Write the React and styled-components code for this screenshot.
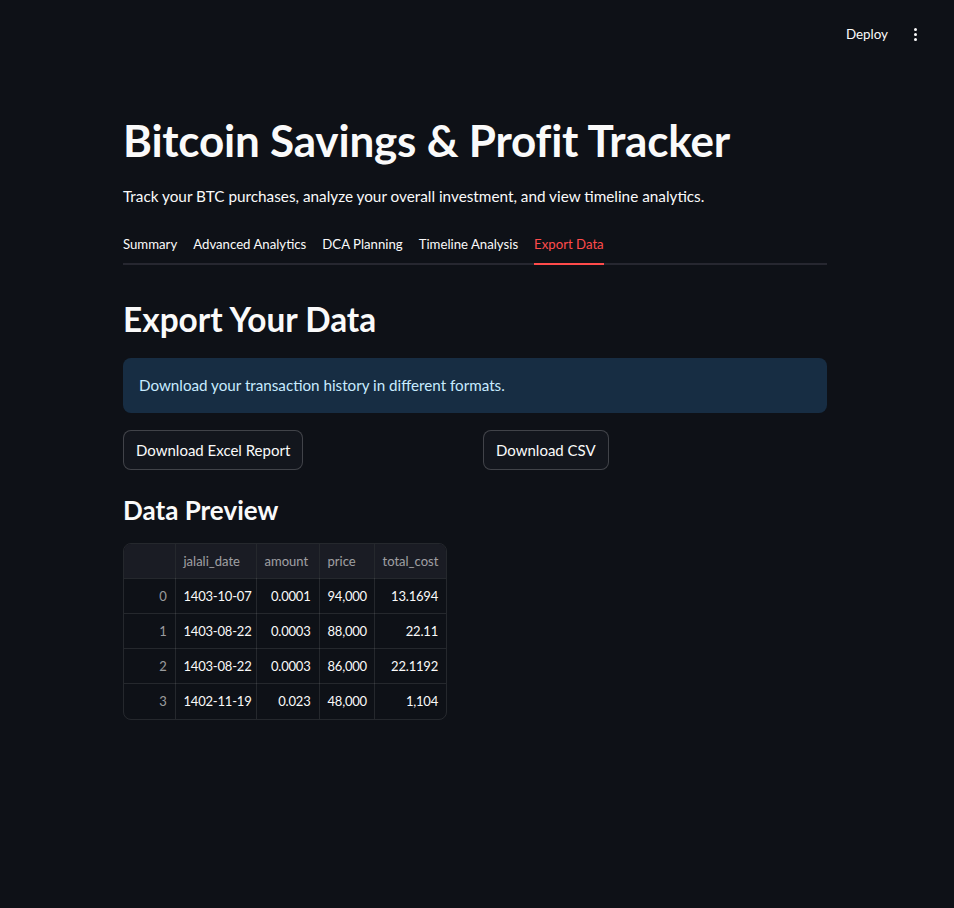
import styled, { createGlobalStyle } from 'styled-components';

const GlobalStyle = createGlobalStyle`
    html, body {
        margin: 0;
        padding: 0;
        background: #0e1117;
    }
    body {
        font-family: Lato, "Noto Sans", sans-serif;
        color: #fafafa;
    }
    * {
        box-sizing: border-box;
    }
`;

const Page = styled.div`
    min-height: 908px;
    background: #0e1117;
    padding-right: 4px;
`;

const Header = styled.header`
    height: 60px;
    display: flex;
    align-items: center;
    justify-content: flex-end;
    gap: 14px;
    padding: 8px 29px 0 0;
`;

const DeployButton = styled.span`
    font-size: 13.4px;
    color: #fafafa;
    padding: 4px 8px;
`;

const Kebab = styled.span`
    display: flex;
    flex-direction: column;
    gap: 2px;
    padding: 4px;

    i {
        width: 3px;
        height: 3px;
        border-radius: 50%;
        background: #fafafa;
    }
`;

const Block = styled.main`
    max-width: 736px;
    margin: 0 auto;
    padding: 54px 16px 0;
`;

const Title = styled.h1`
    margin: 0;
    font-size: 44px;
    font-weight: 700;
    line-height: 1.2;
    letter-spacing: -0.2px;
`;

const Subtitle = styled.p`
    margin: 17px 0 0;
    font-size: 15.3px;
    line-height: 1.6;
`;

const Tabs = styled.nav`
    display: flex;
    gap: 16px;
    margin-top: 20px;
    border-bottom: 2px solid #262730;
`;

const Tab = styled.span`
    font-size: 13.2px;
    line-height: 20px;
    padding: 6px 0 9px;
    margin-bottom: -2px;
    color: ${p => p.active ? '#ff4b4b' : '#fafafa'};
    border-bottom: 2px solid ${p => p.active ? '#ff4b4b' : 'transparent'};
`;

const Heading = styled.h2`
    margin: ${p => p.small ? '25px' : '34px'} 0 0;
    font-size: ${p => p.small ? '26px' : '33.4px'};
    font-weight: 700;
    line-height: 1.2;
`;

const InfoBox = styled.div`
    margin-top: 19px;
    padding: 16px;
    border-radius: 8px;
    background: #172d43;
    color: #c7ebff;
    font-size: 15.2px;
    line-height: 23px;
    min-height: 55px;
`;

const ButtonRow = styled.div`
    display: grid;
    grid-template-columns: 1fr 1fr;
    gap: 16px;
    margin-top: 17px;
`;

const Button = styled.button`
    justify-self: start;
    height: 40px;
    padding: 0 12px;
    border: 1px solid rgba(250, 250, 250, 0.2);
    border-radius: 8px;
    background: #13161d;
    color: #fafafa;
    font-family: inherit;
    font-size: 15px;
`;

const TableWrap = styled.div`
    display: inline-block;
    margin-top: 16px;
    border: 1px solid rgba(250, 250, 250, 0.1);
    border-radius: 8px;
    overflow: hidden;
`;

const Table = styled.table`
    border-collapse: collapse;
    table-layout: fixed;
    width: 322px;
    font-size: 13px;
    letter-spacing: -0.2px;

    th, td {
        height: 35px;
        padding: 0 8px;
        border: 1px solid rgba(250, 250, 250, 0.1);
        text-align: right;
        white-space: nowrap;
        overflow: hidden;
    }
    tr > :first-child { border-left: none; }
    tr > :last-child { border-right: none; }
    thead th {
        border-top: none;
        background: #1a1c24;
        color: rgba(250, 250, 250, 0.6);
        font-weight: 400;
        text-align: left;
        letter-spacing: 0;
    }
    tbody tr:last-child td { border-bottom: none; }
`;

const Col = styled.col`
    width: ${p => p.w}px;
`;

const IndexCell = styled.td`
    color: rgba(250, 250, 250, 0.6);
`;

const Cell = styled.td`
    text-align: ${p => p.left ? 'left' : 'right'} !important;
`;

const rows = [
    ['1403-10-07', '0.0001', '94,000', '13.1694'],
    ['1403-08-22', '0.0003', '88,000', '22.11'],
    ['1403-08-22', '0.0003', '86,000', '22.1192'],
    ['1402-11-19', '0.023', '48,000', '1,104'],
];

const widths = [51, 81, 63, 55, 72];

const tabs = ['Summary', 'Advanced Analytics', 'DCA Planning', 'Timeline Analysis', 'Export Data'];

export default function App() {
    return (
        <Page>
            <GlobalStyle />
            <Header>
                <DeployButton>Deploy</DeployButton>
                <Kebab><i /><i /><i /></Kebab>
            </Header>
            <Block>
                <Title>Bitcoin Savings &amp; Profit Tracker</Title>
                <Subtitle>Track your BTC purchases, analyze your overall investment, and view timeline analytics.</Subtitle>
                <Tabs>
                    {tabs.map(t => <Tab key={t} active={t === 'Export Data'}>{t}</Tab>)}
                </Tabs>
                <Heading>Export Your Data</Heading>
                <InfoBox>Download your transaction history in different formats.</InfoBox>
                <ButtonRow>
                    <Button>Download Excel Report</Button>
                    <Button>Download CSV</Button>
                </ButtonRow>
                <Heading small>Data Preview</Heading>
                <TableWrap>
                    <Table>
                        <colgroup>
                            {widths.map((w, i) => <Col key={i} w={w} />)}
                        </colgroup>
                        <thead>
                            <tr>
                                <th></th>
                                <th>jalali_date</th>
                                <th>amount</th>
                                <th>price</th>
                                <th>total_cost</th>
                            </tr>
                        </thead>
                        <tbody>
                            {rows.map((r, i) => (
                                <tr key={i}>
                                    <IndexCell>{i}</IndexCell>
                                    <Cell left>{r[0]}</Cell>
                                    <Cell>{r[1]}</Cell>
                                    <Cell left>{r[2]}</Cell>
                                    <Cell>{r[3]}</Cell>
                                </tr>
                            ))}
                        </tbody>
                    </Table>
                </TableWrap>
            </Block>
        </Page>
    );
}
